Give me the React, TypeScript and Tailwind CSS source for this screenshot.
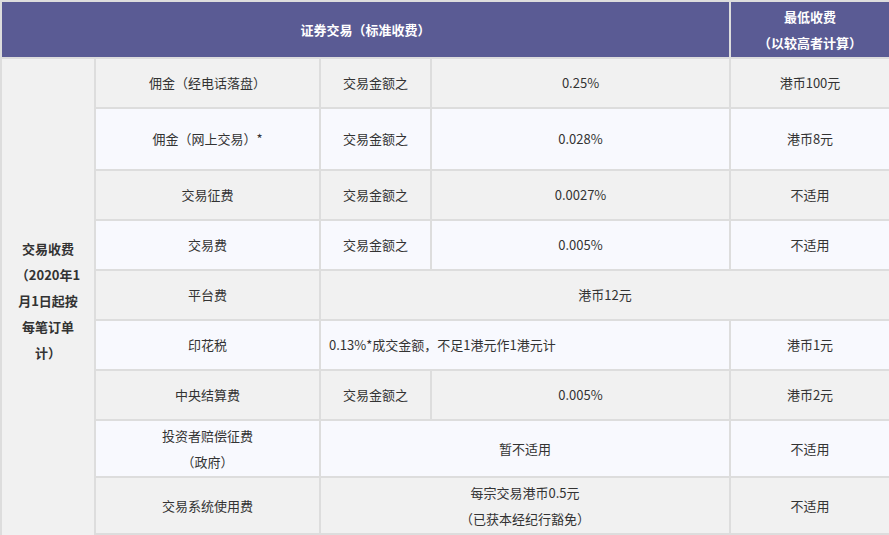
const cell = 'border-2 border-[#dddddd] text-center align-middle';

type Row = { h: string; bg: string; name: React.ReactNode; cells: React.ReactNode };

const g = 'bg-[#f1f1f1]';
const w = 'bg-[#f8f9fe]';

function Split({ a, b }: { a: string; b: string }) {
  return (
    <>
      <td className={cell}>交易金额之</td>
      <td className={cell}>{a}</td>
      <td className={cell}>{b}</td>
    </>
  );
}

const rows: Row[] = [
  { h: 'h-[50px]', bg: g, name: '佣金（经电话落盘）', cells: <Split a="0.25%" b="港币100元" /> },
  { h: 'h-[62px]', bg: w, name: '佣金（网上交易）*', cells: <Split a="0.028%" b="港币8元" /> },
  { h: 'h-[50px]', bg: g, name: '交易征费', cells: <Split a="0.0027%" b="不适用" /> },
  { h: 'h-[50px]', bg: w, name: '交易费', cells: <Split a="0.005%" b="不适用" /> },
  { h: 'h-[50px]', bg: g, name: '平台费', cells: <td className={cell} colSpan={3}>港币12元</td> },
  {
    h: 'h-[50px]', bg: w, name: '印花税',
    cells: (
      <>
        <td className={`${cell} text-left pl-2`} colSpan={2}>0.13%*成交金额，不足1港元作1港元计</td>
        <td className={cell}>港币1元</td>
      </>
    ),
  },
  { h: 'h-[50px]', bg: g, name: '中央结算费', cells: <Split a="0.005%" b="港币2元" /> },
  {
    h: 'h-[57px]', bg: w, name: <>投资者赔偿征费<br />（政府）</>,
    cells: (
      <>
        <td className={cell} colSpan={2}>暂不适用</td>
        <td className={cell}>不适用</td>
      </>
    ),
  },
  {
    h: 'h-[57px]', bg: g, name: '交易系统使用费',
    cells: (
      <>
        <td className={cell} colSpan={2}>每宗交易港币0.5元<br />（已获本经纪行豁免）</td>
        <td className={cell}>不适用</td>
      </>
    ),
  },
];

export default function App() {
  return (
    <div className="w-[889px] h-[535px] overflow-hidden bg-white text-[13px] leading-[26px] text-[#333]" style={{ fontFamily: '"Noto Sans CJK SC", "Microsoft YaHei", sans-serif' }}>
      <table className="border-collapse table-fixed w-[889px] border-2 border-[#dddddd]">
        <colgroup>
          <col className="w-[94px]" />
          <col className="w-[225px]" />
          <col className="w-[111px]" />
          <col className="w-[299px]" />
          <col className="w-[160px]" />
        </colgroup>
        <tbody>
          <tr className="h-[57px] bg-[#5a5b94] text-white font-bold">
            <td className="border-2 border-[#dddddd] text-center" colSpan={4}>证券交易（标准收费）</td>
            <td className="border-2 border-[#dddddd] text-center leading-[26px]">最低收费<br />（以较高者计算）</td>
          </tr>
          {rows.map((r, i) => (
            <tr key={i} className={`${r.h} ${r.bg}`}>
              {i === 0 && (
                <td rowSpan={rows.length + 1} className={`${cell} ${g} font-bold px-3`}>
                  交易收费（2020年1月1日起按每笔订单计）
                </td>
              )}
              <td className={cell}>{r.name}</td>
              {r.cells}
            </tr>
          ))}
          <tr className={`h-[10px] ${w}`}>
            <td className={cell} colSpan={4}></td>
          </tr>
        </tbody>
      </table>
    </div>
  );
}
